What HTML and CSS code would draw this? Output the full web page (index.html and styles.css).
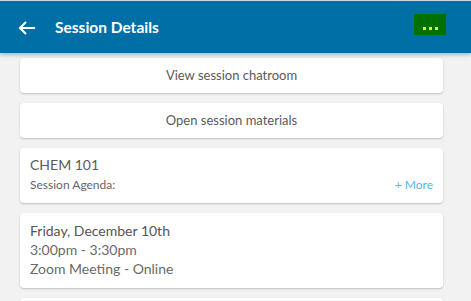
FILE: index.html
```html
<!DOCTYPE html>
<html lang="en">
<head>
    <meta charset="UTF-8">
    <meta name="viewport" content="width=device-width, initial-scale=1.0">
    <title>Session Details</title>
    <link rel="stylesheet" href="styles.css">
</head>
<body>

<div id="barra">
    <div class="izquierda">
        <svg class="flecha" width="18" height="16" viewBox="0 0 18 16">
            <path d="M17 8H2M8 2L2 8l6 6" fill="none" stroke="white" stroke-width="2"/>
        </svg>
        <h1>Session Details</h1>
    </div>
    <div class="menu">
        <span></span><span></span><span></span>
    </div>
</div>

<div id="contenido">
    <div class="tarjeta boton">View session chatroom</div>
    <div class="tarjeta boton">Open session materials</div>
    <div class="tarjeta curso">
        <div class="titulo">CHEM 101</div>
        <div class="agenda">
            <span>Session Agenda:</span>
            <a href="#" class="mas">+ More</a>
        </div>
    </div>
    <div class="tarjeta fecha">
        <div class="dia">Friday, December 10th</div>
        <div>3:00pm - 3:30pm</div>
        <div>Zoom Meeting - Online</div>
    </div>
    <div class="tarjeta vacia"></div>
</div>

</body>
</html>
```

FILE: styles.css
```css
html, body {
    height: 100%;
}
body {
    font-family: Lato, "Noto Sans", sans-serif;
    margin: 0;
    background-color: #f2f2f2;
    overflow: hidden;
    display: flex;
    flex-direction: column;
}
#barra {
    display: flex;
    align-items: center;
    justify-content: space-between;
    flex-shrink: 0;
    height: 53px;
    background-color: #006fa6;
    border-top: 1px solid #c9d9e3;
    box-sizing: border-box;
    box-shadow: 0 2px 4px rgba(0, 0, 0, 0.25);
    padding: 0 25px 0 18px;
    position: relative;
    z-index: 1;
}
.izquierda {
    display: flex;
    align-items: center;
}
.flecha {
    margin-right: 19px;
    margin-top: 1px;
}
#barra h1 {
    margin: 0;
    font-size: 15.5px;
    font-weight: bold;
    color: white;
}
.menu {
    display: flex;
    align-items: flex-end;
    justify-content: center;
    gap: 3px;
    width: 32px;
    height: 21px;
    box-sizing: border-box;
    padding-bottom: 5px;
    margin-top: -6px;
    background-color: #007000;
}
.menu span {
    width: 3px;
    height: 3px;
    background-color: #f5f500;
}
#contenido {
    flex: 1;
    min-height: 0;
    overflow: hidden;
    display: flex;
    flex-direction: column;
    gap: 10px;
    padding: 5px 28px 0 20px;
}
.tarjeta {
    flex-shrink: 0;
    background: white;
    border-radius: 4px;
    box-shadow: 0 1px 2px rgba(0, 0, 0, 0.22);
    color: #5a5a5a;
}
.boton {
    height: 35px;
    display: flex;
    align-items: center;
    justify-content: center;
    font-size: 13px;
    padding-bottom: 1px;
    box-sizing: border-box;
}
.curso {
    padding: 8px 10px 9px 10px;
    height: 38px;
}
.curso .titulo {
    font-size: 14px;
    line-height: 18px;
}
.agenda {
    display: flex;
    justify-content: space-between;
    align-items: center;
    margin-top: 3px;
    font-size: 12px;
    color: #666;
}
.mas {
    color: #4fb8f2;
    text-decoration: none;
    font-size: 12px;
}
.fecha {
    padding: 8px 10px 10px 10px;
    font-size: 14px;
    line-height: 19px;
    color: #6a6a6a;
}
.fecha .dia {
    color: #555;
}
.vacia {
    height: 40px;
}
```
